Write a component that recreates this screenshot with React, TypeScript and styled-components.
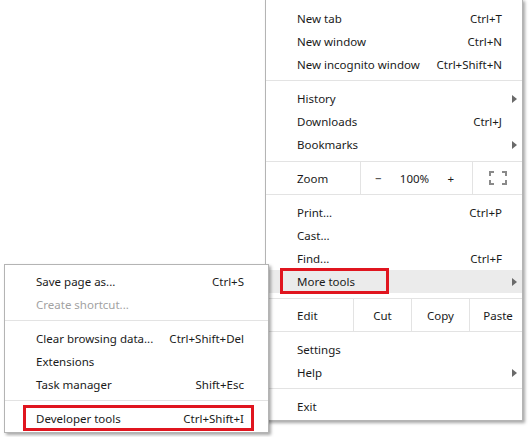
import React from "react";
import styled, { createGlobalStyle } from "styled-components";

const GlobalStyle = createGlobalStyle`
  html, body { margin: 0; padding: 0; background: #ffffff; }
  body { font-family: "Noto Sans", "Open Sans", sans-serif; font-size: 11.5px; color: #1a1a1a; }
`;

const Canvas = styled.div`
  position: relative;
  width: 529px;
  height: 437px;
  overflow: hidden;
  background: #ffffff;
`;

const Menu = styled.div<{ $top: number; $left: number; $width: number; $z: number; $padTop: number }>`
  position: absolute;
  top: ${(p) => p.$top}px;
  left: ${(p) => p.$left}px;
  width: ${(p) => p.$width}px;
  z-index: ${(p) => p.$z};
  box-sizing: border-box;
  background: #ffffff;
  border: 1px solid #b4b4b4;
  box-shadow: 2px 2px 3px rgba(0, 0, 0, 0.35);
  padding: ${(p) => p.$padTop}px 0 2px;
  display: flex;
  flex-direction: column;
`;

const Item = styled.div<{ $active?: boolean; $disabled?: boolean; $right: number }>`
  position: relative;
  height: 23px;
  display: flex;
  align-items: center;
  padding: 0 ${(p) => p.$right}px 0 31px;
  background: ${(p) => (p.$active ? "#ebebeb" : "transparent")};
  color: ${(p) => (p.$disabled ? "#a2a2a2" : "#1a1a1a")};
  white-space: nowrap;
`;

const Label = styled.span`
  flex: 1;
`;

const Shortcut = styled.span`
  margin-left: 12px;
`;

const Arrow = styled.span`
  position: absolute;
  right: 5px;
  top: 8px;
  width: 0;
  height: 0;
  border-top: 4px solid transparent;
  border-bottom: 4px solid transparent;
  border-left: 5px solid #6a6a6a;
`;

const Separator = styled.div`
  height: 1px;
  background: #e3e3e3;
  margin: 4px 0 6px;
`;

const ControlRow = styled.div<{ $cols: string }>`
  display: grid;
  grid-template-columns: ${(p) => p.$cols};
  height: 34px;
  box-sizing: border-box;
  border-top: 1px solid #e3e3e3;
  border-bottom: 1px solid #e3e3e3;
  margin: 5px 0 6px;
`;

const Cell = styled.div<{ $divider?: boolean; $align?: string; $pad?: string }>`
  display: flex;
  align-items: center;
  justify-content: ${(p) => p.$align || "center"};
  padding: ${(p) => p.$pad || "0"};
  border-left: ${(p) => (p.$divider ? "1px solid #e3e3e3" : "none")};
  color: #1a1a1a;
  white-space: nowrap;
`;

const ZoomGroup = styled(Cell)`
  justify-content: space-between;
  padding: 0 18px 0 14px;
`;

const Callout = styled.div<{ $left: number; $width: number }>`
  position: absolute;
  left: ${(p) => p.$left}px;
  top: -2px;
  width: ${(p) => p.$width}px;
  height: 26px;
  box-sizing: border-box;
  border: 3px solid #e0151f;
  pointer-events: none;
`;

const FullscreenIcon = () => (
  <svg width="18" height="14" viewBox="0 0 18 14" fill="none" stroke="#8a8a8a" strokeWidth="2">
    <path d="M1 5V1h4" />
    <path d="M13 1h4v4" />
    <path d="M17 9v4h-4" />
    <path d="M5 13H1V9" />
  </svg>
);

type Entry = { label: string; key?: string; sub?: boolean; disabled?: boolean };

const Row = ({ e, right, active, children }: { e: Entry; right: number; active?: boolean; children?: React.ReactNode }) => (
  <Item $right={right} $active={active} $disabled={e.disabled}>
    <Label>{e.label}</Label>
    {e.key && <Shortcut>{e.key}</Shortcut>}
    {e.sub && <Arrow />}
    {children}
  </Item>
);

export default function App() {
  const R = 20;
  const SR = 24;
  return (
    <Canvas>
      <GlobalStyle />
      <Menu $top={-1} $left={265} $width={258} $z={1} $padTop={7}>
        <Row right={R} e={{ label: "New tab", key: "Ctrl+T" }} />
        <Row right={R} e={{ label: "New window", key: "Ctrl+N" }} />
        <Row right={R} e={{ label: "New incognito window", key: "Ctrl+Shift+N" }} />
        <Separator />
        <Row right={R} e={{ label: "History", sub: true }} />
        <Row right={R} e={{ label: "Downloads", key: "Ctrl+J" }} />
        <Row right={R} e={{ label: "Bookmarks", sub: true }} />
        <ControlRow $cols="94px 112px 1fr">
          <Cell $align="flex-start" $pad="0 0 0 31px">Zoom</Cell>
          <ZoomGroup $divider>
            <span>−</span>
            <span>100%</span>
            <span>+</span>
          </ZoomGroup>
          <Cell $divider>
            <FullscreenIcon />
          </Cell>
        </ControlRow>
        <Row right={R} e={{ label: "Print...", key: "Ctrl+P" }} />
        <Row right={R} e={{ label: "Cast..." }} />
        <Row right={R} e={{ label: "Find...", key: "Ctrl+F" }} />
        <Row right={R} active e={{ label: "More tools", sub: true }}>
          <Callout $left={14} $width={109} />
        </Row>
        <ControlRow $cols="87px 58px 58px 1fr">
          <Cell $align="flex-start" $pad="0 0 0 31px">Edit</Cell>
          <Cell $divider>Cut</Cell>
          <Cell $divider>Copy</Cell>
          <Cell $divider $pad="0 0 0 4px">Paste</Cell>
        </ControlRow>
        <Row right={R} e={{ label: "Settings" }} />
        <Row right={R} e={{ label: "Help", sub: true }} />
        <Separator />
        <Row right={R} e={{ label: "Exit" }} />
      </Menu>

      <Menu $top={264} $left={4} $width={265} $z={2} $padTop={5}>
        <Row right={SR} e={{ label: "Save page as...", key: "Ctrl+S" }} />
        <Row right={SR} e={{ label: "Create shortcut...", disabled: true }} />
        <Separator />
        <Row right={SR} e={{ label: "Clear browsing data...", key: "Ctrl+Shift+Del" }} />
        <Row right={SR} e={{ label: "Extensions" }} />
        <Row right={SR} e={{ label: "Task manager", key: "Shift+Esc" }} />
        <Separator />
        <Row right={SR} e={{ label: "Developer tools", key: "Ctrl+Shift+I" }}>
          <Callout $left={18} $width={231} />
        </Row>
      </Menu>
    </Canvas>
  );
}
